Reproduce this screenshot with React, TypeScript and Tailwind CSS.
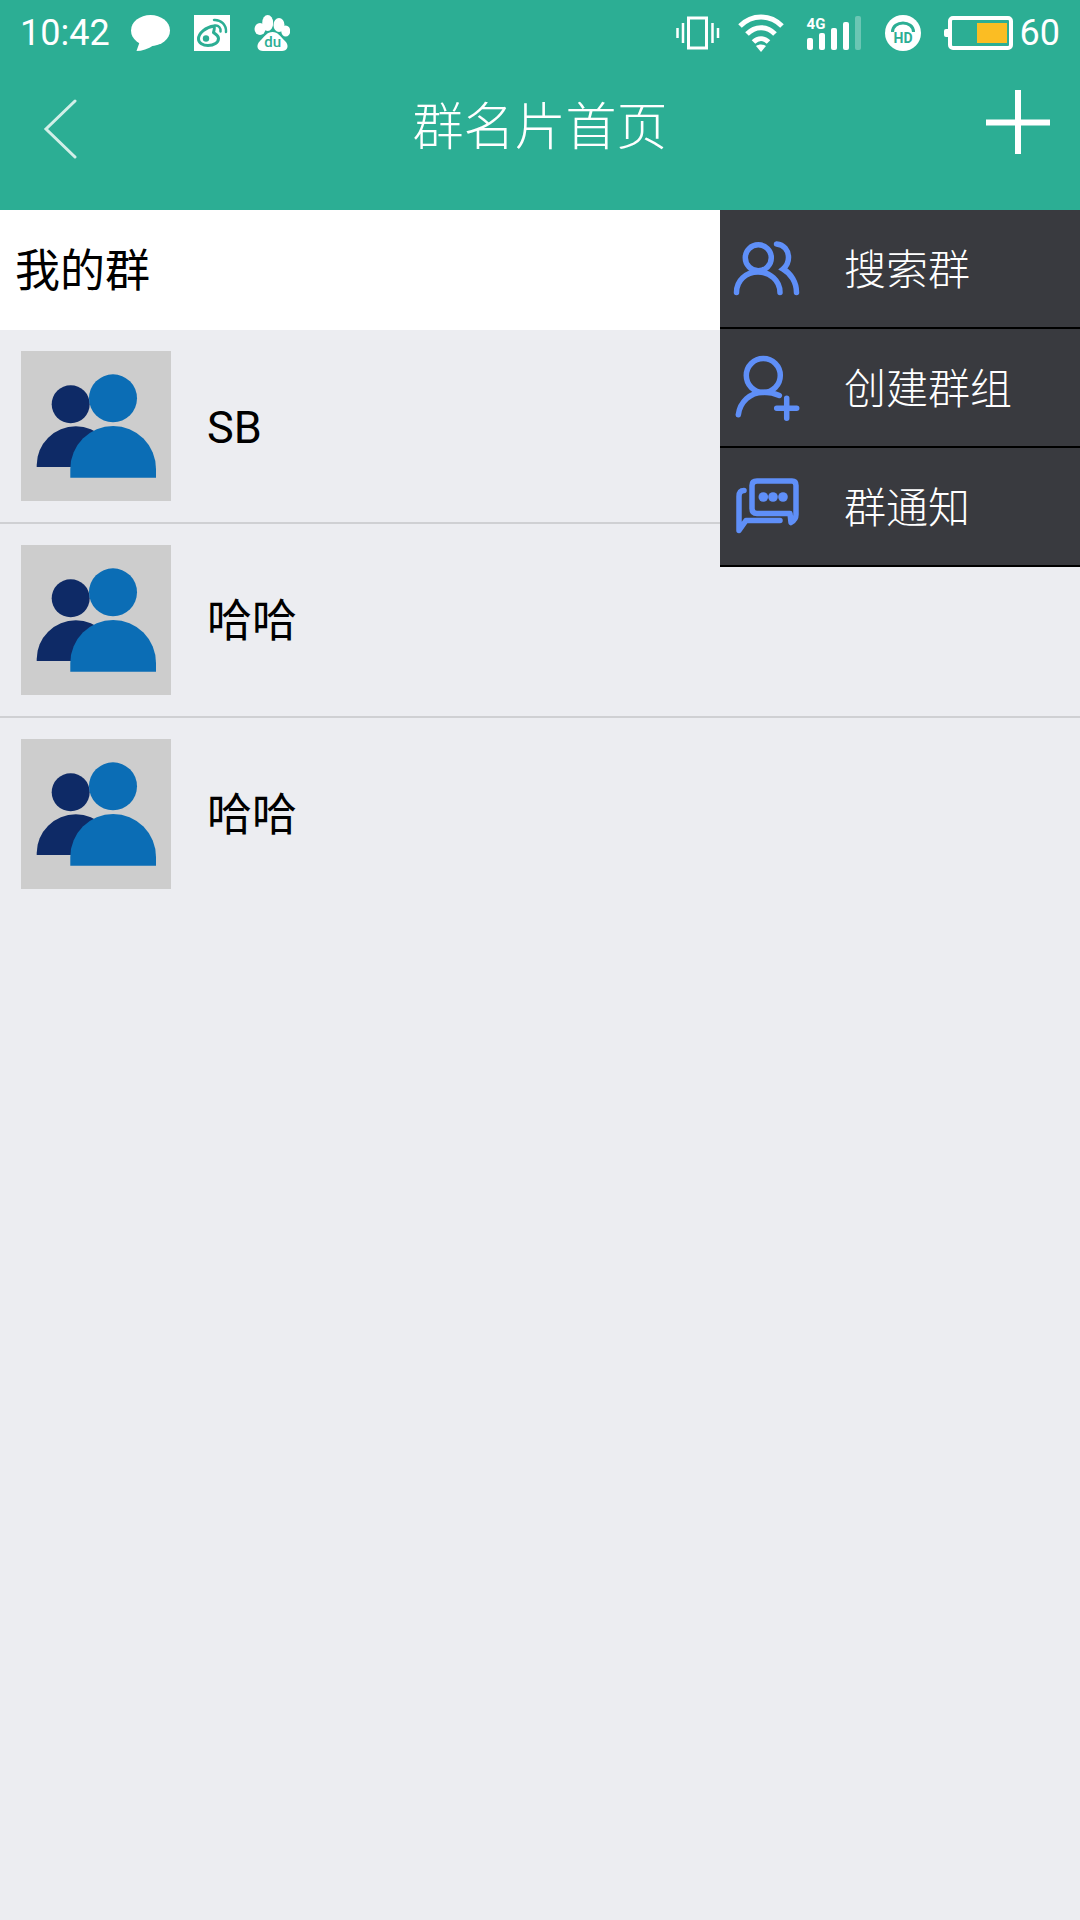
const FONT = "font-['Roboto','Noto_Sans_CJK_SC',sans-serif]";

const GroupAvatar = () => (
  <svg viewBox="0 0 150 150" className="w-[150px] h-[150px] shrink-0 bg-[#cdcdcd]">
    <circle cx="49.7" cy="53.3" r="19" fill="#0e2a66" />
    <path d="M15.7 116V114A39 38.5 0 0 1 94 114V116Z" fill="#0e2a66" />
    <circle cx="92" cy="47.3" r="24" fill="#0b6db5" />
    <path d="M49.3 126.7V118A42.85 43 0 0 1 135 118V126.7Z" fill="#0b6db5" />
  </svg>
);

const GroupRow = ({ name, line = true }: { name: string; line?: boolean }) => (
  <div className={line ? "border-b-2 border-[#cfd0d3]" : ""}>
    <div className="flex items-center p-[21px]">
      <GroupAvatar />
      <span className="ml-[36px] mt-[4px] text-[45px] text-black">{name}</span>
    </div>
  </div>
);

const SearchIcon = () => (
  <svg viewBox="8 6.5 70 64" className="w-[70px] h-[64px]" fill="none" stroke="#5f8ff8" strokeWidth="5.500" strokeLinecap="round">
    <circle cx="33.3" cy="27.3" r="13" />
    <path d="M11.500 62C11.500 50 21 41.500 33 41.500S55 50 55 62" />
    <path d="M51.500 13.500C59 14 63.500 20 63.500 27C63.500 32 61 36 58 38.500C66 43 71.500 52 71.500 62" />
  </svg>
);

const CreateIcon = () => (
  <svg viewBox="0 0 70 66" className="w-[70px] h-[66px]" fill="none" stroke="#5f8ff8" strokeWidth="5.500" strokeLinecap="round">
    <circle cx="30.3" cy="20.5" r="17" />
    <path d="M5.300 59.800C7 47 17 37.500 30 37.200C36 37 41 38 46.300 40.500" />
    <path d="M43.700 53.200H63.700M53.700 43.200V63.200" />
  </svg>
);

const NoticeIcon = () => (
  <svg viewBox="8 9.5 70 64" className="w-[70px] h-[64px]">
    <path d="M27 20Q27 15.500 32 15.500H67Q71 15.500 71 20V49Q71 54 66 57L65 48H32Q27 48 27 43Z" fill="none" stroke="#5f8ff8" strokeWidth="5.500" strokeLinejoin="round" />
    <circle cx="38.300" cy="31.500" r="4.800" fill="#5f8ff8" />
    <circle cx="48" cy="31.500" r="4.800" fill="#5f8ff8" />
    <circle cx="58" cy="31.500" r="4.800" fill="#5f8ff8" />
    <path d="M19 25Q14 25 14 31V65L21 55H55" fill="none" stroke="#5f8ff8" strokeWidth="5.500" strokeLinecap="round" strokeLinejoin="round" />
  </svg>
);

const PopupItem = ({ icon, label }: { icon: React.ReactNode; label: string }) => (
  <div className="h-[119px] border-b-2 border-black flex items-center pl-[13px]">
    <div className="w-[70px] flex justify-center">{icon}</div>
    <span className="ml-[41px] mt-[4px] text-[42px] text-white font-light leading-none">{label}</span>
  </div>
);

const StatusBar = () => (
  <div className="h-[66px] flex items-center text-white text-[36px] leading-none">
    <span className="ml-[20px] w-[89px]">10:42</span>
    {/* chat bubble */}
    <svg viewBox="0 0 40 37" className="ml-[22px] w-[40px] h-[37px]" fill="#fff">
      <ellipse cx="19.500" cy="15.500" rx="19.500" ry="15.500" />
      <path d="M9 26L5.500 36C11 36 17 34 23 30Z" />
    </svg>
    {/* weibo */}
    <svg viewBox="0 0 36 36" className="ml-[23px] w-[36px] h-[36px]">
      <rect width="36" height="36" fill="#fff" />
      <path d="M20 11C12 12 4.500 18 4.500 24C4.500 28 9 30.500 14 30.500C20 30.500 24.500 27.500 24.500 23.500C24.500 20 20 18.500 19.500 17.500C20.500 14 20.500 12 20 11Z" fill="none" stroke="#2cae94" strokeWidth="3" strokeLinejoin="round" />
      <circle cx="12" cy="23.500" r="3.200" fill="#2cae94" />
      <path d="M20 5C27 4.500 32.500 10 32 17M21 10.500C24.500 10 27 13 26.500 16.500" fill="none" stroke="#2cae94" strokeWidth="2.500" strokeLinecap="round" />
    </svg>
    {/* baidu paw */}
    <svg viewBox="0 0 36 36" className="ml-[24px] w-[36px] h-[36px]" fill="#fff">
      <ellipse cx="6" cy="14" rx="5.500" ry="6" />
      <ellipse cx="13.700" cy="8" rx="5.500" ry="8" />
      <ellipse cx="25" cy="10" rx="5.500" ry="7" />
      <ellipse cx="31.700" cy="16" rx="4.500" ry="5.500" />
      <path d="M18.500 17C24 17 26 21 31 26C36 31 33 36 28 36H9C4 36 1 31 6 26C11 21 13 17 18.500 17Z" />
      <text x="18.700" y="32" textAnchor="middle" fontSize="15" fontWeight="500" fontFamily="Roboto" fill="#2cae94">du</text>
    </svg>
    <div className="flex-1" />
    {/* vibrate */}
    <svg viewBox="0 0 44 34" className="w-[44px] h-[34px]" fill="none" stroke="#fff">
      <rect x="12.500" y="2" width="18" height="30" strokeWidth="3" />
      <path d="M1.500 12V22M7 7V27M36.500 7V27M42 12V22" strokeWidth="2.500" />
    </svg>
    {/* wifi */}
    <svg viewBox="0 0 46 38" className="ml-[18px] w-[46px] h-[38px]" fill="none" stroke="#fff" strokeWidth="5">
      <path d="M2 12C14 0 32 0 44 12M9 20C17 11.500 29 11.500 37 20M15.500 28C20 23.500 26 23.500 30.500 28" />
      <path d="M18 32L23 38L28 32C25 30 21 30 18 32Z" fill="#fff" stroke="none" />
    </svg>
    {/* 4G signal */}
    <div className="ml-[23px] relative w-[54px] h-[34px]">
      <span className="absolute top-[1px] left-0 text-[15px] font-bold font-['Roboto'] leading-[14px]">4G</span>
      <div className="absolute inset-0 flex items-end gap-[6px]">
        <div className="w-[6px] h-[12px] bg-white rounded-[2px]" />
        <div className="w-[6px] h-[17px] bg-white rounded-[2px]" />
        <div className="w-[6px] h-[22px] bg-white rounded-[2px]" />
        <div className="w-[6px] h-[28px] bg-white rounded-[2px]" />
        <div className="w-[6px] h-[34px] bg-white/30 rounded-[2px]" />
      </div>
    </div>
    {/* HD call */}
    <svg viewBox="0 0 36 36" className="ml-[24px] w-[36px] h-[36px]">
      <circle cx="18" cy="18" r="18" fill="#fff" />
      <path d="M7.500 17C7.500 5 28.500 5 28.500 17" fill="none" stroke="#2cae94" strokeWidth="3" />
      <text x="18" y="27.500" textAnchor="middle" fontSize="14" fontWeight="700" fill="#2cae94" fontFamily="Roboto">HD</text>
    </svg>
    {/* battery */}
    <div className="ml-[23px] flex items-center">
      <div className="w-[4px] h-[8px] bg-white rounded-l-[2px]" />
      <div className="w-[65px] h-[34px] border-[4px] border-white rounded-[5px] flex justify-end items-center pr-[2px]">
        <div className="w-[30px] h-[20px] bg-[#fbbd23]" />
      </div>
    </div>
    <span className="ml-[7px] mr-[20px]">60</span>
  </div>
);

export default function App() {
  return (
    <div className={`relative w-[1080px] min-h-[1920px] bg-[#ecedf1] ${FONT}`}>
      <header className="h-[210px] bg-[#2cae94]">
        <StatusBar />
        <div className="relative h-[120px] flex items-center justify-center">
          <svg viewBox="0 0 34 60" className="absolute left-[43px] top-[33px] w-[34px] h-[60px]" fill="none" stroke="#d3efe8" strokeWidth="3" strokeLinecap="round">
            <path d="M32 2L3 30L32 58" />
          </svg>
          <h1 className="text-[51px] mt-[3px] font-light text-white leading-none">群名片首页</h1>
          <svg viewBox="0 0 64 64" className="absolute left-[986px] top-[24px] w-[64px] h-[64px]" fill="#fff">
            <rect y="29.500" width="64" height="6" />
            <rect x="29" width="6" height="64" />
          </svg>
        </div>
      </header>

      <div className="h-[120px] bg-white flex items-center pl-[15px]">
        <span className="text-[45px] mt-[2px] text-black leading-none">我的群</span>
      </div>

      <GroupRow name="SB" />
      <GroupRow name="哈哈" />
      <GroupRow name="哈哈" line={false} />

      <div className="absolute top-[210px] right-0 w-[360px] bg-[#393a3f]">
        <PopupItem icon={<SearchIcon />} label="搜索群" />
        <PopupItem icon={<CreateIcon />} label="创建群组" />
        <PopupItem icon={<NoticeIcon />} label="群通知" />
      </div>
    </div>
  );
}
